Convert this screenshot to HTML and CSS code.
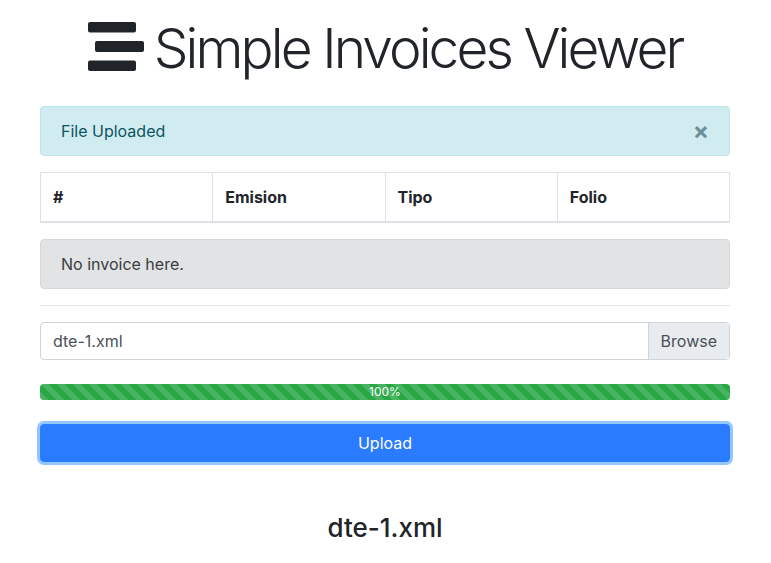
FILE: index.html
```html
<!DOCTYPE html>
<html>
<head>
<meta charset="utf-8">
<link rel="stylesheet" href="styles.css">
</head>
<body>
<div class="container">
  <h1 class="title">
    <svg class="logo" width="56" height="49" viewBox="0 0 56 49">
      <rect x="0" y="0" width="48" height="10.5" rx="2" fill="#212529"/>
      <rect x="7" y="19" width="49" height="11" rx="2" fill="#212529"/>
      <rect x="0" y="38.5" width="48" height="10.5" rx="2" fill="#212529"/>
    </svg>
    <span class="title-text">Simple Invoices Viewer</span>
  </h1>
  <div class="alert alert-info">
    <span>File Uploaded</span>
    <span class="close">&times;</span>
  </div>
  <table class="table">
    <thead>
      <tr><th>#</th><th>Emision</th><th>Tipo</th><th>Folio</th></tr>
    </thead>
  </table>
  <div class="alert alert-secondary">No invoice here.</div>
  <hr class="sep">
  <div class="input-group">
    <div class="file-label">dte-1.xml</div>
    <div class="browse">Browse</div>
  </div>
  <div class="progress">
    <div class="progress-bar">100%</div>
  </div>
  <button class="btn">Upload</button>
  <h4 class="filename">dte-1.xml</h4>
</div>
</body>
</html>
```
FILE: styles.css
```css
html, body { margin: 0; padding: 0; }
body {
  font-family: Inter, "Liberation Sans", sans-serif;
  font-size: 16px;
  color: #212529;
  background: #fff;
}
.container {
  width: 690px;
  margin: 0 0 0 40px;
  padding-top: 11px;
  display: flex;
  flex-direction: column;
}
.title {
  margin: 0 0 25px;
  display: flex;
  align-items: center;
  justify-content: center;
  gap: 10px;
  font-weight: 300;
  font-size: 55px;
  line-height: 70px;
  letter-spacing: -2.9px;
  color: #212529;
}
.title-text { padding-top: 4px; line-height: 66px; }
.logo { flex: none; }
.alert {
  border: 1px solid transparent;
  border-radius: 4px;
  padding: 12px 20px;
  line-height: 24px;
  font-size: 16px;
}
.alert-info {
  background: #d1ecf1;
  border-color: #bee5eb;
  color: #0c5460;
  display: flex;
  justify-content: space-between;
  align-items: center;
  margin-bottom: 16px;
}
.close {
  font-size: 24px;
  font-weight: 700;
  color: #6a9197;
  line-height: 24px;
  margin-right: 0;
}
.table {
  width: 100%;
  border-collapse: collapse;
  table-layout: fixed;
  margin-bottom: 16px;
}
.table th {
  border: 1px solid #dee2e6;
  border-bottom-width: 2px;
  padding: 12px;
  text-align: left;
  font-weight: 700;
  line-height: 24px;
  font-size: 16px;
}
.alert-secondary {
  background: #e2e3e5;
  border-color: #d6d8db;
  color: #383d41;
}
.sep {
  border: 0;
  border-top: 1px solid rgba(0,0,0,.1);
  margin: 16px 0;
  width: 100%;
}
.input-group {
  display: flex;
  height: 38px;
  border: 1px solid #ced4da;
  border-radius: 4px;
  box-sizing: border-box;
  overflow: hidden;
}
.file-label {
  flex: 1;
  padding: 0 12px;
  line-height: 36px;
  color: #495057;
}
.browse {
  padding: 0 12px;
  line-height: 36px;
  background: #e9ecef;
  border-left: 1px solid #ced4da;
  color: #495057;
}
.progress {
  margin-top: 24px;
  height: 16px;
  border-radius: 4px;
  background: #e9ecef;
  overflow: hidden;
  display: flex;
}
.progress-bar {
  flex: 1;
  background-color: #28a745;
  background-image: linear-gradient(45deg, rgba(255,255,255,.15) 25%, transparent 25%, transparent 50%, rgba(255,255,255,.15) 50%, rgba(255,255,255,.15) 75%, transparent 75%, transparent);
  background-size: 16px 16px;
  color: #fff;
  font-size: 12px;
  line-height: 16px;
  text-align: center;
}
.btn {
  margin-top: 24px;
  height: 38px;
  width: 100%;
  border: 1px solid #2a7bff;
  border-radius: 4px;
  background: #2a7bff;
  color: #fff;
  font-family: inherit;
  font-size: 16px;
  box-shadow: 0 0 0 3px rgba(38,143,255,.5);
}
.filename {
  margin: 50px 0 0;
  text-align: center;
  font-size: 26px;
  font-weight: 500;
  line-height: 31px;
}
```
